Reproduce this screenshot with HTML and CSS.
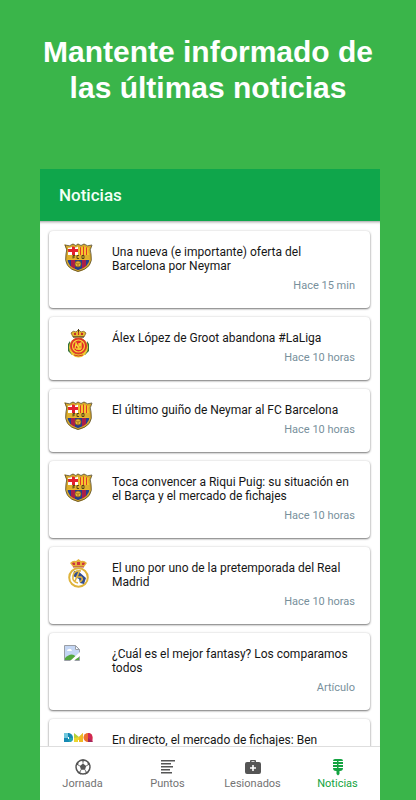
FILE: index.html
```html
<!DOCTYPE html>
<html lang="es">
<head>
<meta charset="utf-8">
<meta name="viewport" content="width=device-width, initial-scale=1">
<title>Noticias</title>
<link rel="stylesheet" href="styles.css">
</head>
<body>
<svg class="sprite" aria-hidden="true">
  <defs>
    <clipPath id="barca-clip"><path d="M2 3Q6 5 9 2Q12 5 14 2Q17 5 20 2Q23 5 27 3Q24 7 26 11Q29 24 14 28Q0 24 3 11Q4 7 2 3Z"/></clipPath>
    <symbol id="barca" viewBox="0 0 29 29">
      <g clip-path="url(#barca-clip)">
        <path fill="#e9b72c" d="M0 0h29v29H0z"/>
        <path fill="#fff" d="M4 3h10v9H4z"/>
        <path fill="#e3202f" d="M8 3h3v9H8zM4 6h10v3H4z"/>
        <path fill="#f7c52c" d="M15 3h11v9H15z"/>
        <path fill="#dc3a2c" d="M16 3h1v9h-1zM19 3h1v9h-1zM22 3h1v9h-1z"/>
        <path fill="#263f8e" d="M2 17h25v12H2z"/>
        <path fill="#a91f49" d="M7 17h4v12H7zM18 17h4v12h-4z"/>
        <path fill="#dfb12d" d="M2 12h25v4H2z"/>
        <path fill="none" stroke="#352d18" stroke-width=".8" d="M9 15.500v-3h2M9 14h2M15 12.500h-2v3h2M18 12.500v3h2v-3z"/>
        <circle cx="14" cy="21" r="3" fill="#e8b632" stroke="#8e601e" stroke-width=".8"/>
        <path fill="none" stroke="#8e601e" stroke-width=".7" d="M12 20l2 1 2-1M14 21v3"/>
      </g>
      <path fill="none" stroke="#d9a92a" stroke-width="1.800" d="M2 3Q6 5 9 2Q12 5 14 2Q17 5 20 2Q23 5 27 3Q24 7 26 11Q29 24 14 28Q0 24 3 11Q4 7 2 3Z"/>
      <path fill="none" stroke="#544a2c" stroke-width=".8" d="M1 2Q6 4 9 1Q12 4 14 1Q17 4 20 1Q23 4 28 2Q25 7 27 11Q30 25 14 28.500Q-1 25 2 11Q4 7 1 2Z"/>
    </symbol>
    <symbol id="mallorca" viewBox="0 0 29 29">
      <path fill="#34723c" d="M6 12l-2 3 0 7 4 4 2-2-3-5zM23 12l2 3 0 7-4 4-2-2 3-5z"/>
      <path fill="#e5b92f" stroke="#725025" stroke-width=".7" d="M9 8L7 4q2-3 5-1l2-2h1l2 2q3-2 5 1l-2 4z"/>
      <path fill="#c42d2b" d="M10 4h2v2h-2zM14 3h1v3h-1zM17 4h2v2h-2z"/>
      <path fill="none" stroke="#493b20" d="M14.500 0v3M9 8h11"/>
      <ellipse cx="14.500" cy="18.500" rx="9.500" ry="10" fill="#f1c82f"/>
      <circle cx="14.500" cy="17" r="8" fill="#e32a2c" stroke="#d6442a"/>
      <circle cx="14.500" cy="17" r="6" fill="none" stroke="#f6d734" stroke-width="1.200"/>
      <path fill="none" stroke="#f6d734" stroke-width="1.300" d="M11 20l1-6 2 4 3-4v6M15 14v7M12 20h5"/>
      <path fill="none" stroke="#cf3b29" d="M10 26q4 2 9 0"/>
    </symbol>
    <symbol id="madrid" viewBox="0 0 29 29">
      <path fill="#e5b23b" d="M9 8L6 4q3-3 6-2l2.500-2L17 2q3-1 6 2l-3 4z"/>
      <path fill="#ce3340" d="M8 4q2-1 3 0v2H9zM13 3h3v3h-3zM18 4q2-1 3 0l-1 2h-2z"/>
      <path fill="none" stroke="#b2403b" d="M9 8h11"/>
      <circle cx="14.500" cy="18.500" r="9.300" fill="#fff" stroke="#dfb43c" stroke-width="2"/>
      <path fill="#324d91" d="M10 12l4 0 8 7-2 6-4-1-1-4-6-3z"/>
      <path fill="none" stroke="#e0b440" stroke-width="1.600" d="M17 12q-7-1-8 5t5 7M11 22l4-9M12 18h5q3 2-1 5"/>
    </symbol>
    <symbol id="broken" viewBox="0 0 16 16">
      <path fill="#c4d6f4" stroke="#9b9fa6" d="M.5.5h11l4 4v11H.5z"/>
      <path fill="#fff" d="M3 6q0-2 2-2 2-1 3 2zM11 1v4h4z"/>
      <path fill="none" stroke="#9b9fa6" d="M11.500.5v4h4"/>
      <path fill="#53a83f" d="M1 15v-2q5-5 9-3l5 5z"/>
      <path fill="#fff" d="M16 7v4l-6 5H6z"/>
      <path fill="#53a83f" d="M11 15l4-3v3z"/>
    </symbol>
    <symbol id="dmq" viewBox="0 0 29 29">
      <path fill="#1689b4" d="M0 2h5q4 1 4 5t-4 4H0z"/><path fill="#71c7dc" d="M0 2h4v5H0z"/><path fill="#27a6b1" d="M4 7h5q0 4-4 4z"/>
      <path fill="#b5ce37" d="M10 2l5 4 4-4v9h-9z"/><path fill="#ead62e" d="M10 7l5-1v5h-5z"/><path fill="#f0ba24" d="M15 6l4-4v9h-4z"/>
      <circle cx="24" cy="6.500" r="4.500" fill="#ed702d"/><path fill="#cf2755" d="M24 2q4.500 0 4.500 5v4H24z"/><path fill="#9e285c" d="M24 7l5 4h-5z"/>
      <path fill="#fff" d="M4 6h1v2H4zM14 9h1v2h-1z"/>
    </symbol>
  </defs>
</svg>

<h1 class="headline">Mantente informado de<br>las últimas noticias</h1>

<div class="app">
  <header class="app-bar"><h2 class="app-title">Noticias</h2></header>

  <main class="news">
    <article class="card">
      <svg class="crest" role="img" aria-label="Barcelona"><use href="#barca"/></svg>
      <div class="card-body"><h3 class="title">Una nueva (e importante) oferta del Barcelona por Neymar</h3><p class="meta">Hace 15 min</p></div>
    </article>
    <article class="card">
      <svg class="crest" role="img" aria-label="Mallorca"><use href="#mallorca"/></svg>
      <div class="card-body"><h3 class="title">Álex López de Groot abandona #LaLiga</h3><p class="meta">Hace 10 horas</p></div>
    </article>
    <article class="card">
      <svg class="crest" role="img" aria-label="Barcelona"><use href="#barca"/></svg>
      <div class="card-body"><h3 class="title">El último guiño de Neymar al FC Barcelona</h3><p class="meta">Hace 10 horas</p></div>
    </article>
    <article class="card">
      <svg class="crest" role="img" aria-label="Barcelona"><use href="#barca"/></svg>
      <div class="card-body"><h3 class="title">Toca convencer a Riqui Puig: su situación en el Barça y el mercado de fichajes</h3><p class="meta">Hace 10 horas</p></div>
    </article>
    <article class="card">
      <svg class="crest" role="img" aria-label="Real Madrid"><use href="#madrid"/></svg>
      <div class="card-body"><h3 class="title">El uno por uno de la pretemporada del Real Madrid</h3><p class="meta">Hace 10 horas</p></div>
    </article>
    <article class="card">
      <svg class="crest crest-missing" aria-hidden="true"><use href="#broken"/></svg>
      <div class="card-body"><h3 class="title">¿Cuál es el mejor fantasy? Los comparamos todos</h3><p class="meta">Artículo</p></div>
    </article>
    <article class="card">
      <svg class="crest" aria-hidden="true"><use href="#dmq"/></svg>
      <div class="card-body"><h3 class="title">En directo, el mercado de fichajes: Ben</h3></div>
    </article>
  </main>

  <nav class="tabs">
    <a class="tab" href="#jornada">
      <svg class="tab-icon" viewBox="0 0 18 18"><circle cx="9" cy="9" r="7" fill="#fff" stroke="currentColor" stroke-width="1.500"/><path fill="currentColor" d="M9 5.500l3.200 2.400-1.200 3.800H7L5.800 7.900zM6 2.200l3 1.600 3-1.600-3-1zM1.500 8l2.800-1.200.3-3.300-2 1.500zM16.500 8l-2.800-1.200-.3-3.300 2 1.500zM3 13.500l3 .2 1 2.700-2.500-1zM15 13.500l-3 .2-1 2.700 2.500-1z"/><path stroke="currentColor" stroke-width=".8" d="M9 3.500v2M4 7l2 1M14 7l-2 1M6 14l1-2.300M12 14l-1-2.300"/></svg>
      Jornada
    </a>
    <a class="tab" href="#puntos">
      <svg class="tab-icon" viewBox="0 0 18 18"><path fill="currentColor" d="M2 2h14v1.600H2zM2 5h10v1.600H2zM2 8h12v1.600H2zM2 11h9v1.600H2zM2 14h11v1.600H2z"/></svg>
      Puntos
    </a>
    <a class="tab" href="#lesionados">
      <svg class="tab-icon" viewBox="0 0 18 18"><path fill="currentColor" fill-rule="evenodd" d="M6 4V3q0-1 1-1h4q1 0 1 1v1h3q2 0 2 2v8q0 2-2 2H3q-2 0-2-2V6q0-2 2-2zM7.500 3.300V4h3v-.7zM8.200 7v2.200H6v1.600h2.200V13h1.600v-2.200H12V9.200H9.800V7z"/></svg>
      Lesionados
    </a>
    <a class="tab tab-active" href="#noticias" aria-current="page">
      <svg class="tab-icon" viewBox="0 0 18 18"><path fill="currentColor" d="M4 3q0-2 2-2h6q2 0 2 2H9.500v1H14v2H9.500v1H14v2H9.500v1H14q0 3-3 3h-.5v3L9 17.500 7.500 16v-3H7q-3 0-3-3h4V9H4V7h4V6H4V4h4V3z"/></svg>
      Noticias
    </a>
  </nav>
</div>
</body>
</html>
```

FILE: styles.css
```css
* { box-sizing: border-box; }

body {
  margin: 0;
  height: 100vh;
  display: flex;
  flex-direction: column;
  background: #3ab54a;
  font-family: Roboto, "Liberation Sans", sans-serif;
}

h1, h2, h3, p { margin: 0; }

.sprite {
  position: absolute;
  width: 0;
  height: 0;
}

.headline {
  padding: 34px 0 63px;
  color: #fff;
  font: bold 30px/36px "Arial Rounded MT Bold", "Liberation Sans", Arial, sans-serif;
  text-align: center;
}

.app {
  flex: 1;
  min-height: 0;
  margin: 0 36px 0 40px;
  display: flex;
  flex-direction: column;
  background: #fff;
}

.app-bar {
  padding: 14px 19px;
  background: #0fa64b;
}

.app-title {
  color: #f3fff6;
  font-size: 17px;
  font-weight: 500;
  line-height: 24px;
}

.news {
  flex: 1;
  min-height: 0;
  padding: 10px 10px 10px 9px;
  display: flex;
  flex-direction: column;
  gap: 9px;
  overflow-y: auto;
  scrollbar-width: none;
  box-shadow: inset 0 3px 3px -2px rgba(0, 0, 0, .4);
}

.card {
  flex: none;
  display: flex;
  gap: 19px;
  padding: 14px 15px 15px;
  border-radius: 4px;
  background: #fff;
  box-shadow: 0 1px 2px rgba(0, 0, 0, .5), 0 0 3px rgba(0, 0, 0, .12);
}

.crest {
  flex: none;
  width: 29px;
  height: 29px;
  margin: -2px 0;
}

.crest-missing {
  width: 16px;
  height: 16px;
  margin: -2px 13px 0 0;
}

.card-body { flex: 1; }

.title {
  color: #161616;
  font-size: 12px;
  font-weight: 400;
  line-height: 14px;
}

.meta {
  margin-top: 6px;
  color: #78909c;
  font-size: 11px;
  line-height: 14px;
  text-align: right;
}

.tabs {
  display: grid;
  grid-template-columns: repeat(4, 1fr);
  border-top: 1px solid #dedede;
  background: #fff;
}

.tab {
  padding: 11px 0 9px;
  display: flex;
  flex-direction: column;
  align-items: center;
  gap: 1px;
  color: #737373;
  font-size: 11px;
  line-height: 14px;
  text-decoration: none;
}

.tab-icon {
  width: 18px;
  height: 18px;
  color: #555;
}

.tab-active, .tab-active .tab-icon { color: #14a341; }
```
